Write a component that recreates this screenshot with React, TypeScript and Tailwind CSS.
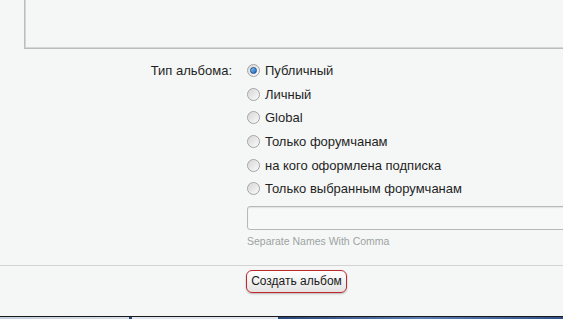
import React from "react";

const options = [
  "Публичный",
  "Личный",
  "Global",
  "Только форумчанам",
  "на кого оформлена подписка",
  "Только выбранным форумчанам",
];

function Radio({ checked }: { checked?: boolean }) {
  return (
    <span className="relative flex h-[13px] w-[13px] shrink-0 items-center justify-center rounded-full border border-[#a2a2a2] bg-gradient-to-br from-[#d5d5d5] to-[#fbfbfb] shadow-[inset_0_0_1px_#ffffff]">
      {checked && (
        <span className="h-[7px] w-[7px] rounded-full border border-[#1b4f8c] bg-gradient-to-br from-[#8cc8f5] to-[#1663b8]" />
      )}
    </span>
  );
}

export default function App() {
  return (
    <div
      className="flex h-[319px] w-[563px] flex-col overflow-hidden bg-[#f5f7f6] text-[13px] text-[#1f1f1f]"
      style={{ fontFamily: '"Liberation Sans", Arial, sans-serif' }}
    >
      <div className="ml-[24px] mr-[-10px] h-[49px] shrink-0 border-b border-l border-[#bdbdbd] shadow-[inset_1px_-1px_0_#d6d6d6]" />

      <div className="flex pt-[10px]">
        <div className="flex h-[24px] w-[232px] shrink-0 items-center justify-end">
          Тип альбома:
        </div>
        <div className="ml-[15px] flex flex-1 flex-col">
          {options.map((o, i) => (
            <div key={o} className="flex h-[23.6px] items-center gap-[5px]">
              <Radio checked={i === 0} />
              <span className="leading-none">{o}</span>
            </div>
          ))}
          <div className="mr-[-10px] mt-[5px] h-[24px] rounded-[3px] border border-[#b8b8b8] bg-[#f7f8f8] shadow-[inset_0_1px_1px_#e2e2e2]" />
          <div className="mt-[5px] text-[10.5px] leading-[12px] text-[#9ca3a3]">
            Separate Names With Comma
          </div>
        </div>
      </div>

      <div className="mt-[18px] h-px w-full bg-[#d3d3d3]" />

      <div className="flex pt-[4px]">
        <div className="ml-[246px] flex h-[23px] w-[101px] items-center justify-center rounded-[6px] border border-[#c0272c] bg-gradient-to-b from-[#ffffff] to-[#e4e4e4] text-[12px] text-[#1a1a1a] shadow-[0_1px_2px_rgba(0,0,0,0.25)]">
          Создать альбом
        </div>
      </div>

      <div className="mt-auto flex h-[3px] w-full flex-col">
        <div className="h-px w-full bg-[#1a1a1a]" />
        <div className="flex h-[2px] w-full">
          <div className="w-[129px] bg-gradient-to-r from-[#c3cfdc] to-[#d5dee8]" />
          <div className="w-[3px] bg-[#2a4670]" />
          <div className="w-[146px] bg-[#dfe5ec]" />
          <div className="flex-1 bg-gradient-to-r from-[#27477a] via-[#5b7fb3] to-[#2d5289]" />
        </div>
      </div>
    </div>
  );
}
